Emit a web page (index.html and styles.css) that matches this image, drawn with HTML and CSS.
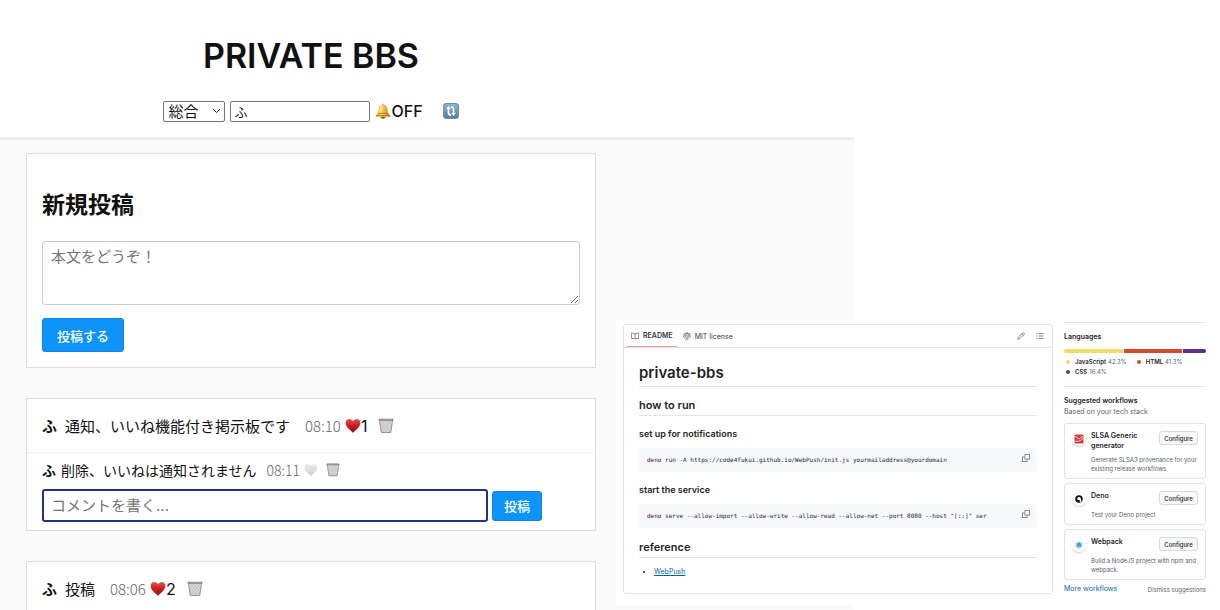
FILE: index.html
```html
<!DOCTYPE html>
<html lang="ja">
<head>
<meta charset="UTF-8">
<meta name="viewport" content="width=device-width, initial-scale=1.0">
<title>PRIVATE BBS</title>
<link rel="stylesheet" href="styles.css">
</head>
<body>

<!-- shared icons -->
<svg class="defs" width="0" height="0" aria-hidden="true">
    <defs>
        <linearGradient id="red" x1="0" y1="0" x2="0" y2="1">
            <stop offset="0" stop-color="#e0524c"/>
            <stop offset="0.5" stop-color="#c91c1f"/>
            <stop offset="1" stop-color="#8e0f14"/>
        </linearGradient>
        <linearGradient id="grey" x1="0" y1="0" x2="0" y2="1">
            <stop offset="0" stop-color="#ececec"/>
            <stop offset="1" stop-color="#cfcfcf"/>
        </linearGradient>
        <linearGradient id="gold" x1="0" y1="0" x2="1" y2="0">
            <stop offset="0" stop-color="#d99a1c"/>
            <stop offset="0.4" stop-color="#fbdc62"/>
            <stop offset="1" stop-color="#b9791a"/>
        </linearGradient>
        <linearGradient id="blue" x1="0" y1="0" x2="0" y2="1">
            <stop offset="0" stop-color="#8fb2d0"/>
            <stop offset="1" stop-color="#557fa6"/>
        </linearGradient>
    </defs>
    <symbol id="heart" viewBox="0 0 16 16">
        <path d="M8 15C6.4 12.6 .6 9.4.6 5 .6 2.600 2.300 1 4.400 1 6 1 7.400 2 8 3.500 8.600 2 10 1 11.600 1c2.100 0 3.800 1.600 3.800 4 0 4.400-5.800 7.600-7.400 10z"/>
    </symbol>
    <symbol id="trash" viewBox="0 0 16 16">
        <path d="M1 1.500h14l-2 13.500H3z" fill="#d9dade"/>
        <path d="M3 3l9.500 11M6 3l7 8M9.500 3l4 4.500M2.500 6l7.500 9M3 10l4 5M13 3L3.500 14M10 3L3 11M6.500 3L2.500 7.500M13.500 6.500L6 15M13 11l-3.500 4" stroke="#b3b6bc" stroke-width=".6" fill="none"/>
        <path d="M1.500 2.500L3.300 14.500h9.400l1.800-12" fill="none" stroke="#94979c" stroke-width="1"/>
        <rect x=".5" y=".7" width="15" height="2" rx="1" fill="#77797d"/>
        <path d="M1.500 1.500h13" stroke="#b7babd" stroke-width=".6"/>
    </symbol>
    <symbol id="copy" viewBox="0 0 16 16">
        <path d="M0 6.750C0 5.784.784 5 1.750 5h1.500a.75.75 0 0 1 0 1.500h-1.500a.25.25 0 0 0-.25.25v7.500c0 .138.112.25.25.25h7.500a.25.25 0 0 0 .25-.25v-1.500a.75.75 0 0 1 1.500 0v1.500A1.750 1.750 0 0 1 9.250 16h-7.500A1.750 1.750 0 0 1 0 14.250Z"/>
        <path d="M5 1.750C5 .784 5.784 0 6.750 0h7.500C15.216 0 16 .784 16 1.750v7.500A1.750 1.750 0 0 1 14.250 11h-7.500A1.750 1.750 0 0 1 5 9.250Zm1.750-.25a.25.25 0 0 0-.25.25v7.500c0 .138.112.25.25.25h7.500a.25.25 0 0 0 .25-.25v-7.500a.25.25 0 0 0-.25-.25Z"/>
    </symbol>
</svg>

<div class="bbs">
    <header>
        <div class="column">
            <h1>PRIVATE BBS</h1>
            <div class="controls">
                <select aria-label="カテゴリ">
                    <option>総合</option>
                </select>
                <input type="text" aria-label="名前" value="ふ">
                <button type="button" class="bell">
                    <svg width="16" height="16" viewBox="0 0 16 16" aria-hidden="true">
                        <ellipse cx="8" cy="14" rx="2.600" ry="1.700" fill="#8a5a14"/>
                        <path d="M7 1.500C7 .3 9 .3 9 1.500c2.500.7 3.500 3 3.600 6 .1 2.300 1.200 3.600 2.600 4.900.5.600.2 1.300-.6 1.300H1.400c-.8 0-1.100-.7-.6-1.300C2.200 11.100 3.300 9.800 3.400 7.500 3.500 4.500 4.500 2.200 7 1.500z" fill="url(#gold)"/>
                        <path d="M1.200 12.600h13.600M3.500 10.300h9" stroke="#a66d14" stroke-width=".8"/>
                        <path d="M6 3.500C5 5 5 8 4.600 9.500" stroke="#fff3b0" stroke-width="1" fill="none"/>
                    </svg>OFF
                </button>
                <button type="button" class="reload" aria-label="更新">
                    <svg width="16" height="16" viewBox="0 0 16 16" aria-hidden="true">
                        <rect x=".5" y=".5" width="15" height="15" rx="2.500" fill="url(#blue)" stroke="#6f8fae"/>
                        <path d="M5.500 5v4.500c0 1.700 1 2.600 2.500 2.600M10.500 11V6.500c0-1.700-1-2.600-2.500-2.600" fill="none" stroke="#fff" stroke-width="1.700"/>
                        <path d="M3.200 6l2.300-3 2.300 3zM8.200 10l2.300 3 2.300-3z" fill="#fff"/>
                    </svg>
                </button>
            </div>
        </div>
    </header>

    <main class="column">
        <form class="card new-post">
            <h2>新規投稿</h2>
            <textarea aria-label="本文" placeholder="本文をどうぞ！"></textarea>
            <button type="button" class="submit">投稿する</button>
        </form>

        <article class="card">
            <div class="post">
                <b>ふ</b>
                <span class="text">通知、いいね機能付き掲示板です</span>
                <time>08:10</time>
                <button type="button" class="like" aria-label="いいね 1"><svg width="16" height="16" fill="url(#red)"><use href="#heart"/></svg>1</button>
                <button type="button" class="delete" aria-label="削除"><svg width="16" height="16"><use href="#trash"/></svg></button>
            </div>
            <div class="comments">
                <div class="comment">
                    <b>ふ</b>
                    <span class="text">削除、いいねは通知されません</span>
                    <time>08:11</time>
                    <button type="button" class="like" aria-label="いいね"><svg width="14" height="14" fill="url(#grey)"><use href="#heart"/></svg></button>
                    <button type="button" class="delete" aria-label="削除"><svg width="14" height="14"><use href="#trash"/></svg></button>
                </div>
                <form class="comment-form">
                    <input type="text" aria-label="コメント" placeholder="コメントを書く...">
                    <button type="button" class="submit">投稿</button>
                </form>
            </div>
        </article>

        <article class="card">
            <div class="post">
                <b>ふ</b>
                <span class="text">投稿</span>
                <time>08:06</time>
                <button type="button" class="like" aria-label="いいね 2"><svg width="16" height="16" fill="url(#red)"><use href="#heart"/></svg>2</button>
                <button type="button" class="delete" aria-label="削除"><svg width="16" height="16"><use href="#trash"/></svg></button>
            </div>
        </article>
    </main>
</div>

<div class="repo" lang="en">
    <section class="readme">
        <nav class="tabs">
            <a href="#readme" class="tab active">
                <svg width="8" height="8" viewBox="0 0 16 16" aria-hidden="true"><path d="M.8 2.500h4.500C6.800 2.500 8 3.500 8 5c0-1.500 1.200-2.500 2.700-2.500h4.500v10.500h-5C9 13 8.300 13.500 8 14.300 7.700 13.500 7 13 5.800 13h-5zM8 5v9" fill="none" stroke="#59636e" stroke-width="1.500"/></svg>
                README
            </a>
            <a href="#license" class="tab">
                <svg width="8" height="8" viewBox="0 0 16 16" aria-hidden="true"><path d="M8 .5v13.500M4.500 14.200h7M1.500 3.500h2.200L8 2.200l4.300 1.300h2.200M3.300 4L.9 9.500c1.300 1.300 3.500 1.300 4.800 0zM12.700 4l-2.400 5.500c1.300 1.300 3.500 1.300 4.800 0z" fill="none" stroke="#59636e" stroke-width="1.500"/></svg>
                MIT license
            </a>
            <span class="tools">
                <button type="button" aria-label="Edit file"><svg width="8" height="8" viewBox="0 0 16 16"><path d="M1.500 14.500l1-4L11.600 1.400c.5-.5 1-.5 1.500 0l1.500 1.500c.5.500.5 1 0 1.500L5.500 13.500zM9.500 3.500l3 3" fill="none" stroke="#59636e" stroke-width="1.500"/></svg></button>
                <button type="button" aria-label="Outline"><svg width="8" height="8" viewBox="0 0 16 16"><path d="M5.500 3H15M5.500 8H15M5.500 13H15M1 3h2M1 8h2M1 13h2" fill="none" stroke="#59636e" stroke-width="1.500"/></svg></button>
            </span>
        </nav>
        <div class="markdown">
            <h1>private-bbs</h1>
            <h2>how to run</h2>
            <h3>set up for notifications</h3>
            <div class="code">
                <code>deno run -A https://code4fukui.github.io/WebPush/init.js yourmailaddress@yourdomain</code>
                <button type="button" aria-label="Copy"><svg width="8" height="8"><use href="#copy"/></svg></button>
            </div>
            <h3>start the service</h3>
            <div class="code">
                <code>deno serve --allow-import --allow-write --allow-read --allow-net --port 8080 --host "[::]" ser</code>
                <button type="button" aria-label="Copy"><svg width="8" height="8"><use href="#copy"/></svg></button>
            </div>
            <h2>reference</h2>
            <ul>
                <li><a href="#webpush">WebPush</a></li>
            </ul>
        </div>
    </section>

    <aside>
        <section class="languages">
            <h2>Languages</h2>
            <div class="bar">
                <span class="js" style="width: 42.3%"></span>
                <span class="html" style="width: 41.3%"></span>
                <span class="css" style="width: 16.4%"></span>
            </div>
            <ul>
                <li><i class="js"></i><b>JavaScript</b> 42.3%</li>
                <li><i class="html"></i><b>HTML</b> 41.3%</li>
                <li><i class="css"></i><b>CSS</b> 16.4%</li>
            </ul>
        </section>
        <section class="workflows">
            <h2>Suggested workflows</h2>
            <p>Based on your tech stack</p>
            <div class="workflow">
                <span class="logo"><svg width="10" height="10" viewBox="0 0 20 20" aria-hidden="true"><rect x="1" y="1" width="18" height="18" rx="2" fill="#d63a34"/><path d="M2 4l8 6 8-6M2 14c7 2 13-1 17-6" fill="none" stroke="#fff" stroke-width="1.600"/></svg></span>
                <h3>SLSA Generic generator</h3>
                <button type="button">Configure</button>
                <p>Generate SLSA3 provenance for your existing release workflows</p>
            </div>
            <div class="workflow">
                <span class="logo"><svg width="8" height="8" viewBox="0 0 16 16" aria-hidden="true"><circle cx="8" cy="8" r="7.500" fill="#111"/><path d="M4.500 7.500C4.500 5.500 6 4.200 8 4.200c2.200 0 3.300 1.500 3.700 3.500l1.300 5-3 2.500c-.3-2-.2-4-1.300-5.200-1.500.3-4.200 0-4.200-2.500z" fill="#fff"/></svg></span>
                <h3>Deno</h3>
                <button type="button">Configure</button>
                <p>Test your Deno project</p>
            </div>
            <div class="workflow">
                <span class="logo"><svg width="8" height="8" viewBox="0 0 16 16" aria-hidden="true"><path d="M8 0l7 4v8l-7 4-7-4V4z" fill="#a5daf5"/><path d="M8 4l4 2.200v4L8 12.500l-4-2.300v-4z" fill="#1c78c0"/><path d="M4.500 6.500L8 8.500l3.500-2M8 8.500v3.500" stroke="#d5effc" fill="none"/></svg></span>
                <h3>Webpack</h3>
                <button type="button">Configure</button>
                <p>Build a NodeJS project with npm and webpack.</p>
            </div>
            <div class="links">
                <a href="#workflows">More workflows</a>
                <button type="button">Dismiss suggestions</button>
            </div>
        </section>
    </aside>
</div>

</body>
</html>
```
FILE: styles.css
```css
* {
    box-sizing: border-box;
}
body {
    margin: 0;
    height: 100vh;
    overflow: hidden;
    position: relative;
    background-color: #fff;
    color: #111;
    font-family: Inter, "Noto Sans CJK JP", sans-serif;
    font-size: 15px;
}
button, input, select, textarea {
    font-family: inherit;
    color: inherit;
}
button {
    margin: 0;
    padding: 0;
    border: none;
    background: none;
    cursor: pointer;
}
svg {
    display: block;
    flex: none;
}
.defs {
    position: absolute;
}

/* bulletin board */
.bbs {
    width: 70%;
    height: 100vh;
    overflow: hidden;
    background-color: #fafafa;
}
.column {
    max-width: 622px;
    padding: 0 26px;
}
header {
    background-color: #fff;
    border-bottom: 3px solid #eee;
    padding: 34px 0 14px;
}
header h1 {
    margin: 0 0 21px;
    font-size: 34px;
    line-height: 44px;
    font-weight: 600;
    text-align: center;
}
.controls {
    display: flex;
    justify-content: center;
    align-items: center;
    gap: 5px;
    height: 24px;
}
.controls select {
    appearance: none;
    width: 62px;
    height: 21px;
    padding: 0 4px;
    border: 1px solid #767676;
    border-radius: 2px;
    background: #fff url("data:image/svg+xml,%3Csvg xmlns='http://www.w3.org/2000/svg' width='9' height='6'%3E%3Cpath d='M1 1l3.500 3.500L8 1' fill='none' stroke='%23222'/%3E%3C/svg%3E") no-repeat right 3px center;
    font-size: 15px;
    line-height: 19px;
}
.controls input {
    width: 140px;
    height: 21px;
    padding: 0 3px;
    border: 1px solid #767676;
    border-radius: 2px;
    background-color: #fff;
    font-size: 13px;
}
.bell {
    display: flex;
    align-items: center;
    font-size: 16px;
    font-weight: 500;
}
.reload {
    margin-left: 15px;
}
main.column {
    padding-top: 13px;
}
.card {
    margin-bottom: 30px;
    border: 1px solid #ddd;
    background-color: #fff;
}
.new-post {
    padding: 34px 15px 15px;
}
.new-post h2 {
    margin: 0 0 18px;
    font-size: 23px;
    line-height: 35px;
}
textarea {
    display: block;
    width: 100%;
    height: 64px;
    margin-bottom: 13px;
    padding: 4px 8px;
    border: 1px solid #ccc;
    border-radius: 3px;
    font-size: 15px;
    line-height: 22px;
}
::placeholder {
    color: #757575;
}
.submit {
    height: 34px;
    padding: 0 14px;
    border: 1px solid #1583dc;
    border-radius: 3px;
    background-color: #0c94fa;
    color: #fff;
    font-size: 13px;
    font-weight: 500;
}
.post, .comment {
    display: flex;
    align-items: center;
}
.post {
    height: 53px;
    padding: 0 15px;
}
.post .text {
    margin: 0 15px 0 8px;
}
.comments {
    padding: 3px 15px 8px;
    border-top: 1px solid #eee;
}
.comment {
    height: 28px;
    margin-bottom: 5px;
    font-size: 14px;
}
.comment .text {
    margin: 0 10px 0 5px;
}
time {
    margin-right: 4px;
    color: #666;
    font-family: "Noto Sans CJK JP", sans-serif;
    font-weight: 300;
}
.like {
    display: flex;
    align-items: center;
    font-size: 16px;
}
.delete {
    margin-left: 11px;
}
.comment .delete {
    margin-left: 8px;
}
.comment-form {
    display: flex;
    align-items: center;
    gap: 4px;
}
.comment-form input {
    width: 446px;
    height: 33px;
    padding: 0 7px;
    border: 2px solid #26327f;
    border-radius: 3px;
    background-color: #fff;
    font-size: 15px;
}
.comment-form .submit {
    height: 30px;
    padding: 0 11px;
}

/* repository window, over the board */
.repo {
    position: absolute;
    top: 320px;
    right: 0;
    width: 604px;
    padding: 2px 14px 11px 7px;
    display: grid;
    grid-template-columns: 1fr 142px;
    gap: 11px;
    background-color: #fff;
    color: #1f2328;
    font-size: 7px;
}
.repo h1, .repo h2, .repo h3, .repo p, .repo ul {
    margin: 0;
    padding: 0;
}
.repo h1, .repo h2, .repo h3 {
    font-weight: 600;
}
.readme {
    margin-top: 2px;
    border: 1px solid #dfe3e7;
    border-radius: 3px;
}
.tabs {
    display: flex;
    height: 23px;
    padding: 0 8px 0 3px;
    border-bottom: 1px solid #dfe3e7;
}
.tab {
    display: flex;
    align-items: center;
    gap: 4px;
    padding: 0 4px;
    text-decoration: none;
}
.tab.active {
    margin-right: 2px;
    border-bottom: 1px solid #ee9c8b;
    font-weight: 600;
}
.tools {
    display: flex;
    align-items: center;
    gap: 11px;
    margin-left: auto;
}
.markdown {
    padding: 14px 15px;
}
.markdown h1, .markdown h2 {
    border-bottom: 1px solid #e4e7ea;
}
.markdown h1 {
    margin-bottom: 11px;
    padding-bottom: 2px;
    font-size: 15px;
    line-height: 22px;
}
.markdown h2 {
    margin-bottom: 12px;
    padding-bottom: 2px;
    font-size: 11px;
    line-height: 15px;
}
.markdown h3 {
    margin-bottom: 8px;
    font-size: 9px;
    line-height: 12px;
}
.code {
    display: flex;
    justify-content: space-between;
    height: 24px;
    margin-bottom: 12px;
    padding: 6px 7px 0 8px;
    border-radius: 3px;
    background-color: #f6f8fa;
    fill: #59636e;
}
.code code {
    font-family: "DejaVu Sans Mono", monospace;
    font-size: 6px;
    line-height: 12px;
    white-space: pre;
}
.code button {
    height: 8px;
}
.markdown ul {
    margin-top: -3px;
    padding-left: 15px;
    line-height: 10px;
}
.repo a {
    color: #0f5fae;
}
.repo .tab {
    color: #32383f;
}
aside {
    border-top: 1px solid #e4e7ea;
}
aside h2 {
    font-size: 7px;
    line-height: 10px;
}
.languages {
    padding: 9px 0;
    border-bottom: 1px solid #e4e7ea;
}
.bar {
    display: flex;
    gap: 1px;
    height: 4px;
    margin: 7px 0 4px;
    overflow: hidden;
    border-radius: 2px;
}
.js {
    background-color: #eedf6c;
}
.html {
    background-color: #d4492f;
}
.css {
    background-color: #5f2f8c;
}
.languages ul {
    display: flex;
    flex-wrap: wrap;
    gap: 0 8px;
    list-style: none;
    color: #59636e;
    font-size: 6px;
    line-height: 10px;
}
.languages li {
    display: flex;
    align-items: center;
    gap: 2px;
}
.languages li b {
    color: #1f2328;
    font-weight: 600;
}
.languages i {
    width: 4px;
    height: 4px;
    margin: 0 3px 0 2px;
    border-radius: 50%;
}
.workflows {
    padding-top: 9px;
}
.workflows p {
    color: #59636e;
    font-size: 6px;
    line-height: 9px;
}
.workflows > p {
    margin-bottom: 6px;
    font-size: 7px;
    line-height: 11px;
}
.workflow {
    display: grid;
    grid-template-columns: 14px 1fr 39px;
    column-gap: 5px;
    margin-bottom: 4px;
    padding: 7px 7px 5px;
    border: 1px solid #dfe3e7;
    border-radius: 3px;
}
.logo {
    display: flex;
    align-items: center;
    justify-content: center;
    width: 14px;
    height: 14px;
    margin-top: 1px;
    border-radius: 50%;
    box-shadow: 0 1px 2px #ccd0d4;
}
.workflow h3 {
    font-size: 7px;
    line-height: 10px;
}
.workflow button {
    height: 14px;
    border: 1px solid #d5dadf;
    border-radius: 3px;
    background-color: #f6f8fa;
    font-size: 6px;
    font-weight: 500;
}
.workflow p {
    grid-column: 2 / 4;
    margin-top: 4px;
}
.links {
    display: flex;
    justify-content: space-between;
    align-items: center;
    line-height: 10px;
}
.links a {
    text-decoration: none;
}
.links button {
    color: #59636e;
    font-size: 6px;
}
```
